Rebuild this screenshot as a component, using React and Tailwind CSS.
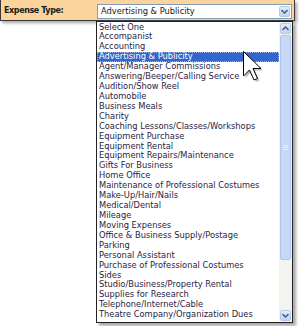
const options = [
  "Select One",
  "Accompanist",
  "Accounting",
  "Advertising & Publicity",
  "Agent/Manager Commissions",
  "Answering/Beeper/Calling Service",
  "Audition/Show Reel",
  "Automobile",
  "Business Meals",
  "Charity",
  "Coaching Lessons/Classes/Workshops",
  "Equipment Purchase",
  "Equipment Rental",
  "Equipment Repairs/Maintenance",
  "Gifts For Business",
  "Home Office",
  "Maintenance of Professional Costumes",
  "Make-Up/Hair/Nails",
  "Medical/Dental",
  "Mileage",
  "Moving Expenses",
  "Office & Business Supply/Postage",
  "Parking",
  "Personal Assistant",
  "Purchase of Professional Costumes",
  "Sides",
  "Studio/Business/Property Rental",
  "Supplies for Research",
  "Telephone/Internet/Cable",
  "Theatre Company/Organization Dues",
];

const Chevron = ({ up }) => (
  <svg width="7" height="5" viewBox="0 0 7 5">
    <path
      d={up ? "M0.5 4 L3.5 1 L6.5 4" : "M0.5 1 L3.5 4 L6.5 1"}
      fill="none"
      stroke="#4d6185"
      strokeWidth="1.6"
    />
  </svg>
);

const ScrollBtn = ({ up }) => (
  <div className="h-[11px] w-[11px] flex items-center justify-center rounded-[2px] border border-[#b7c9ea] bg-gradient-to-b from-[#e3ecfb] to-[#c4d5f3]">
    <Chevron up={up} />
  </div>
);

export default function App() {
  return (
    <div className="w-[300px] h-[326px] bg-white relative overflow-hidden" style={{ fontFamily: '"DejaVu Sans", Verdana, sans-serif' }}>
      {/* top bar */}
      <div className="w-[295px] h-[21px] bg-[#fbd49d] border border-[#3a3a3a] border-t-0 shadow-[2px_2px_3px_rgba(0,0,0,0.35)] flex items-center">
        <span className="pl-[3px] w-[96px] text-[8px] tracking-[-0.4px] font-bold text-[#1a1a1a] pt-[2px]">Expense Type:</span>
        <div className="mt-[3px] w-[195px] h-[15px] bg-white border border-[#7f9db9] flex items-center">
          <span className="flex-1 pl-[3px] text-[8.3px] text-[#1a1a1a]">Advertising &amp; Publicity</span>
          <div className="mr-[1px]"><ScrollBtn /></div>
        </div>
      </div>

      {/* dropdown list */}
      <div className="ml-[96px] w-[197px] h-[302px] bg-white border border-[#222] shadow-[3px_3px_3px_rgba(0,0,0,0.35)] flex">
        <div className="flex-1 flex flex-col pt-[0.5px]">
          {options.map((o, i) => (
            <div
              key={o}
              className={
                i === 3
                  ? "h-[9.93px] leading-[9.93px] pl-[2px] text-[8.3px] whitespace-nowrap bg-[#3266cc] text-white outline outline-1 outline-dotted outline-[#9bb4e4] -outline-offset-1"
                  : "h-[9.93px] leading-[9.93px] pl-[2px] text-[8.3px] whitespace-nowrap text-[#2a2342]"
              }
            >
              {o}
            </div>
          ))}
        </div>
        <div className="w-[13px] flex flex-col p-[1px] bg-[#f3f3f0]">
          <ScrollBtn up />
          <div className="mt-[1px] h-[225px] rounded-[2px] border border-[#b1c6ee] bg-[#c6d8f6] flex items-center justify-center">
            <div className="w-[5px] flex flex-col gap-[1px]">
              <div className="h-px bg-[#e8effc]" />
              <div className="h-px bg-[#e8effc]" />
              <div className="h-px bg-[#e8effc]" />
            </div>
          </div>
          <div className="flex-1" />
          <ScrollBtn />
        </div>
      </div>

      {/* mouse cursor */}
      <svg className="absolute left-[243px] top-[51px]" width="24" height="34" viewBox="0 0 24 34">
        <path
          d="M2.5 2.5 L2.5 27 L8.5 21 L13 31 L16.5 29.5 L12 19.5 L20 19.5 Z"
          fill="rgba(0,0,0,0.25)"
        />
        <path
          d="M0.5 0.5 L0.5 25 L6.5 19 L11 29 L14.5 27.5 L10 17.5 L18 17.5 Z"
          fill="#fff"
          stroke="#000"
          strokeWidth="1"
          strokeLinejoin="round"
        />
      </svg>
    </div>
  );
}
